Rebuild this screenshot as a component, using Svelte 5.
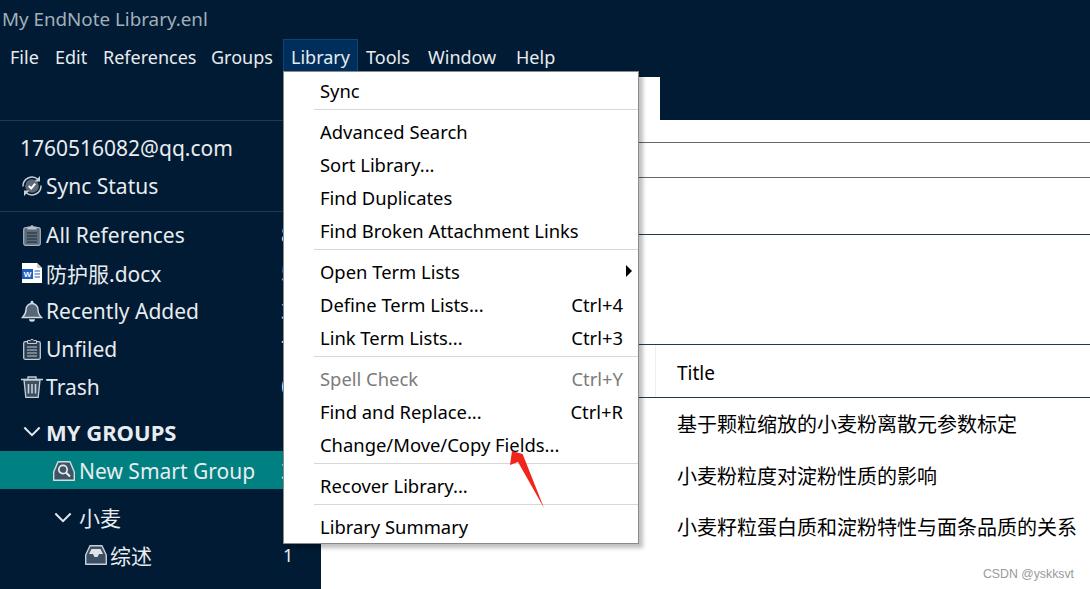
<script>
  const menuBar = ["File", "Edit", "References", "Groups", "Library", "Tools", "Window", "Help"];

  const libraryMenu = [
    [{ label: "Sync" }],
    [
      { label: "Advanced Search" },
      { label: "Sort Library..." },
      { label: "Find Duplicates" },
      { label: "Find Broken Attachment Links" },
    ],
    [
      { label: "Open Term Lists", submenu: true },
      { label: "Define Term Lists...", keys: "Ctrl+4" },
      { label: "Link Term Lists...", keys: "Ctrl+3" },
    ],
    [
      { label: "Spell Check", keys: "Ctrl+Y", disabled: true },
      { label: "Find and Replace...", keys: "Ctrl+R" },
      { label: "Change/Move/Copy Fields..." },
    ],
    [{ label: "Recover Library..." }],
    [{ label: "Library Summary" }],
  ];

  const collections = [
    { icon: "clip", label: "All References", count: "8" },
    { icon: "word", label: "防护服.docx", count: "5" },
    { icon: "bell", label: "Recently Added", count: "3" },
    { icon: "note", label: "Unfiled", count: "7" },
    { icon: "trash", label: "Trash", count: "0" },
  ];

  const titles = [
    "基于颗粒缩放的小麦粉离散元参数标定",
    "小麦粉粒度对淀粉性质的影响",
    "小麦籽粒蛋白质和淀粉特性与面条品质的关系",
  ];
</script>

{#snippet icon(name)}
  <svg class="icon" viewBox="0 0 22 22" aria-hidden="true">
    {#if name === "sync"}
      <circle cx="11" cy="11" r="6.800" fill="#5a6877" />
      <path d="M2 11.500a9 9 0 0 1 15-7M20 10.500a9 9 0 0 1-15 7" fill="none" stroke="#c9d0d7" stroke-width="1.500" />
      <path d="M19 1v5.500h-5.500zM3 21v-5.500h5.500z" fill="#c9d0d7" />
      <path d="M7.800 11l2.400 2.400 4-4.800" fill="none" stroke="#fff" stroke-width="2" />
    {:else if name === "clip"}
      <rect x="2.700" y="3.700" width="16.600" height="17.600" rx="2" fill="#5d6b79" stroke="#a9b3bd" stroke-width="1.200" />
      <path d="M6.500 5.500V2.500h2.800a1.800 1.800 0 0 1 3.400 0h2.800v3z" fill="#b9c2ca" />
      <path d="M6 9h10M6 12h10M6 15h10M6 18h10" stroke="#14283c" stroke-width="1.200" />
    {:else if name === "note"}
      <rect x="2.700" y="3.700" width="16.600" height="17.600" rx="1.500" fill="#2a3d51" stroke="#c3cbd3" stroke-width="1.300" />
      <path d="M6.500 5.500V2.500h2.800a1.800 1.800 0 0 1 3.400 0h2.800v3z" fill="#2a3d51" stroke="#c3cbd3" stroke-width="1" />
      <path d="M6 9h10M6 12h10M6 15h10M6 18h10" stroke="#c3cbd3" stroke-width="1.200" />
    {:else if name === "word"}
      <path d="M1 1h15l5 5v15H1z" fill="#fff" />
      <path d="M16 1v5h5" fill="#c5cad0" />
      <rect x="1" y="7" width="11" height="10" fill="#1f5fc4" />
      <text x="6.500" y="15.200" class="word-mark">W</text>
      <path d="M13.500 9h5.500M13.500 12h5.500M13.500 15h5.500" stroke="#1f5fc4" stroke-width="1.200" />
    {:else if name === "bell"}
      <path d="M11 3.500a6 6 0 0 0-6 6c0 4-1 5.500-3.500 8h19c-2.500-2.500-3.500-4-3.500-8a6 6 0 0 0-6-6z" fill="#56677a" stroke="#d5dae0" stroke-width="1.400" />
      <circle cx="11" cy="2.200" r="1.400" fill="#d5dae0" />
      <path d="M8 19.300h6a3 2.500 0 0 1-6 0z" fill="#d5dae0" />
    {:else if name === "trash"}
      <path d="M0 3.500h22" stroke="#c9d0d7" stroke-width="1.600" />
      <path d="M7 3V1h8v2" fill="none" stroke="#c9d0d7" stroke-width="1.300" />
      <path d="M3 4l1.800 17.300h12.400L19 4z" fill="#3d4f63" stroke="#c9d0d7" stroke-width="1.300" />
      <path d="M7.500 8v9.500M11 8v9.500M14.500 8v9.500" stroke="#c9d0d7" stroke-width="1.600" />
    {:else if name === "smart"}
      <path d="M.7 20.300v-8.300L5 1.700h12l4.300 10.300v8.300z" fill="#3f5566" stroke="#d3dcdf" stroke-width="1.400" stroke-linejoin="round" />
      <circle cx="10" cy="9.500" r="4.200" fill="none" stroke="#e6ecee" stroke-width="1.700" />
      <path d="M13 12.500l4 4" stroke="#e6ecee" stroke-width="2.200" />
    {:else if name === "tray"}
      <path d="M.7 20.300v-9.300L5 1.700h12l4.300 9.300v9.300z" fill="#3d4f63" stroke="#c9d0d7" stroke-width="1.400" stroke-linejoin="round" />
      <path d="M4 10h4l1.500 3h3l1.500-3h4L15.500 5h-9z" fill="#dfe3e7" />
    {/if}
  </svg>
{/snippet}

{#snippet chevron()}
  <svg class="chevron" viewBox="0 0 20 12" aria-hidden="true">
    <path d="M1.500 1.500L10 10l8.500-8.500" fill="none" stroke="#e6eaee" stroke-width="2.200" />
  </svg>
{/snippet}

<div class="window">
  <header class="top">
    <div class="title">My EndNote Library.enl</div>
    <nav class="menubar">
      {#each menuBar as name}
        <span class="menubar-item" class:open={name === "Library"}>{name}</span>
      {/each}
    </nav>
    <div class="tabs"><div class="tab"></div></div>
  </header>

  <div class="body">
    <aside class="sidebar">
      <section class="account">
        <div class="row plain">1760516082@qq.com</div>
        <div class="row">{@render icon("sync")}Sync Status</div>
      </section>
      <section class="collections">
        {#each collections as item}
          <div class="row">
            {@render icon(item.icon)}
            <span class="grow">{item.label}</span>
            <span class="count">{item.count}</span>
          </div>
        {/each}
      </section>
      <section class="groups">
        <div class="row heading">{@render chevron()}MY GROUPS</div>
        <div class="row level1 selected">
          {@render icon("smart")}
          <span class="grow">New Smart Group</span>
          <span class="count">3</span>
        </div>
        <div class="row level1 set">{@render chevron()}小麦</div>
        <div class="row level2">
          {@render icon("tray")}
          <span class="grow">综述</span>
          <span class="count small">1</span>
        </div>
      </section>
    </aside>

    <main class="content">
      <div class="band one"></div>
      <div class="band two"></div>
      <div class="band three"></div>
      <div class="band four"></div>
      <div class="table-head">
        <div></div>
        <div class="head-cell">Title</div>
      </div>
      {#each titles as title}
        <div class="table-row">{title}</div>
      {/each}
      <div class="watermark">CSDN @yskksvt</div>
    </main>
  </div>

  <div class="menu">
    {#each libraryMenu as group, g}
      {#if g > 0}<div class="separator"></div>{/if}
      {#each group as item}
        <div class="menu-item" class:disabled={item.disabled}>
          <span>{item.label}</span>
          {#if item.keys}<span>{item.keys}</span>{/if}
          {#if item.submenu}<span class="submenu-arrow"></span>{/if}
        </div>
      {/each}
    {/each}
  </div>

  <svg class="annotation" viewBox="0 0 40 62" aria-hidden="true">
    <path d="M3 0L1 14l8-3L35 57 14 4 13.500 3z" fill="#f0261c" />
  </svg>
</div>

<style>
  :global(body) {
    margin: 0;
    background: #fff;
  }
  .window {
    position: relative;
    width: 1090px;
    height: 589px;
    overflow: hidden;
    font-family: "Noto Sans", "Noto Sans CJK SC", sans-serif;
    font-size: 19px;
    color: #000;
  }
  .top {
    height: 120px;
    background: #001b33;
    color: #e8ecf0;
  }
  .title {
    height: 39px;
    line-height: 39px;
    padding-left: 2px;
    font-size: 18.800px;
    color: #a3afbb;
  }
  .menubar {
    display: grid;
    grid-template-columns: 45px 48px 108px 80px 75px 62px 88px auto;
    justify-content: start;
    height: 32px;
    padding-left: 2px;
    font-size: 18px;
  }
  .menubar-item {
    padding: 0 7px;
    line-height: 34px;
    border: 1px solid transparent;
    box-sizing: border-box;
  }
  .menubar-item.open {
    background: #002e5a;
    border-color: #0c4676;
  }
  .tabs {
    height: 43px;
    margin-top: 6px;
    padding-left: 330px;
  }
  .tab {
    width: 330px;
    height: 43px;
    background: #fff;
  }
  .body {
    display: flex;
    height: 469px;
  }
  .sidebar {
    width: 321px;
    flex: none;
    box-sizing: border-box;
    background: #001b33;
    color: #e8ecf0;
    font-size: 21px;
  }
  .account {
    height: 92px;
    box-sizing: border-box;
    padding-top: 8px;
    border-top: 1px solid #24394e;
    border-bottom: 1px solid #24394e;
  }
  .collections {
    padding-top: 4px;
  }
  .groups {
    padding-top: 8px;
  }
  .row {
    display: flex;
    align-items: center;
    height: 38px;
    box-sizing: border-box;
    padding-left: 21px;
    gap: 3px;
  }
  .row.plain {
    padding-left: 20px;
  }
  .row.heading {
    height: 37px;
    padding-left: 23px;
    padding-bottom: 2px;
    gap: 5px;
    font-size: 22px;
    font-weight: 700;
  }
  .row.level1 {
    padding-left: 53px;
    gap: 4px;
  }
  .row.level2 {
    padding-left: 85px;
    padding-bottom: 2px;
  }
  .row.selected {
    background: #008080;
    padding-top: 2px;
  }
  .row.set {
    margin-top: 10px;
    padding-left: 54px;
    padding-bottom: 2px;
    gap: 7px;
  }
  .grow {
    flex: 1;
  }
  .count {
    width: 40px;
    flex: none;
  }
  .count.small {
    width: 38px;
    font-size: 18px;
  }
  .icon {
    width: 22px;
    height: 22px;
    flex: none;
  }
  .word-mark {
    font-family: "Liberation Sans", sans-serif;
    font-size: 8px;
    font-weight: 700;
    fill: #fff;
    text-anchor: middle;
  }
  .chevron {
    width: 18px;
    height: 11px;
    flex: none;
  }
  .content {
    flex: 1;
    min-width: 0;
    position: relative;
  }
  .band {
    box-sizing: border-box;
  }
  .band.one {
    height: 23px;
    border-bottom: 1px solid #666;
  }
  .band.two {
    height: 35px;
    border-bottom: 1px solid #666;
  }
  .band.three {
    height: 57px;
    border-bottom: 1px solid #24394e;
  }
  .band.four {
    height: 110px;
    border-bottom: 1px solid #24394e;
  }
  .table-head {
    display: grid;
    grid-template-columns: 334px 1fr;
    height: 53px;
    box-sizing: border-box;
    border-bottom: 1px solid #24394e;
  }
  .head-cell {
    display: flex;
    align-items: center;
    padding: 4px 0 0 21px;
    border-left: 1px solid #eee;
  }
  .table-row {
    height: 51.500px;
    display: flex;
    align-items: center;
    padding-left: 356px;
    font-size: 20px;
  }
  .watermark {
    position: absolute;
    right: 16px;
    bottom: 8px;
    font-family: "Liberation Sans", sans-serif;
    font-size: 12.300px;
    color: #9a9a9a;
  }
  .menu {
    position: absolute;
    left: 283px;
    top: 71px;
    width: 356px;
    box-sizing: border-box;
    padding-top: 3px;
    background: #fff;
    border: 1px solid #8a8a8a;
    box-shadow: 4px 4px 4px rgba(0, 0, 0, 0.25);
    font-size: 18.400px;
  }
  .menu-item {
    position: relative;
    display: flex;
    justify-content: space-between;
    align-items: center;
    height: 33px;
    box-sizing: border-box;
    padding: 0 15px 2px 36px;
  }
  .menu-item:last-child {
    height: 32px;
  }
  .menu-item.disabled {
    color: #7b7b7b;
  }
  .separator {
    height: 1px;
    margin: 1px 0 6px 30px;
    background: #d7d7d7;
  }
  .submenu-arrow {
    position: absolute;
    right: 6px;
    top: 9px;
    border-left: 6px solid #000;
    border-top: 6px solid transparent;
    border-bottom: 6px solid transparent;
  }
  .annotation {
    position: absolute;
    left: 509px;
    top: 451px;
    width: 40px;
    height: 62px;
  }
</style>
